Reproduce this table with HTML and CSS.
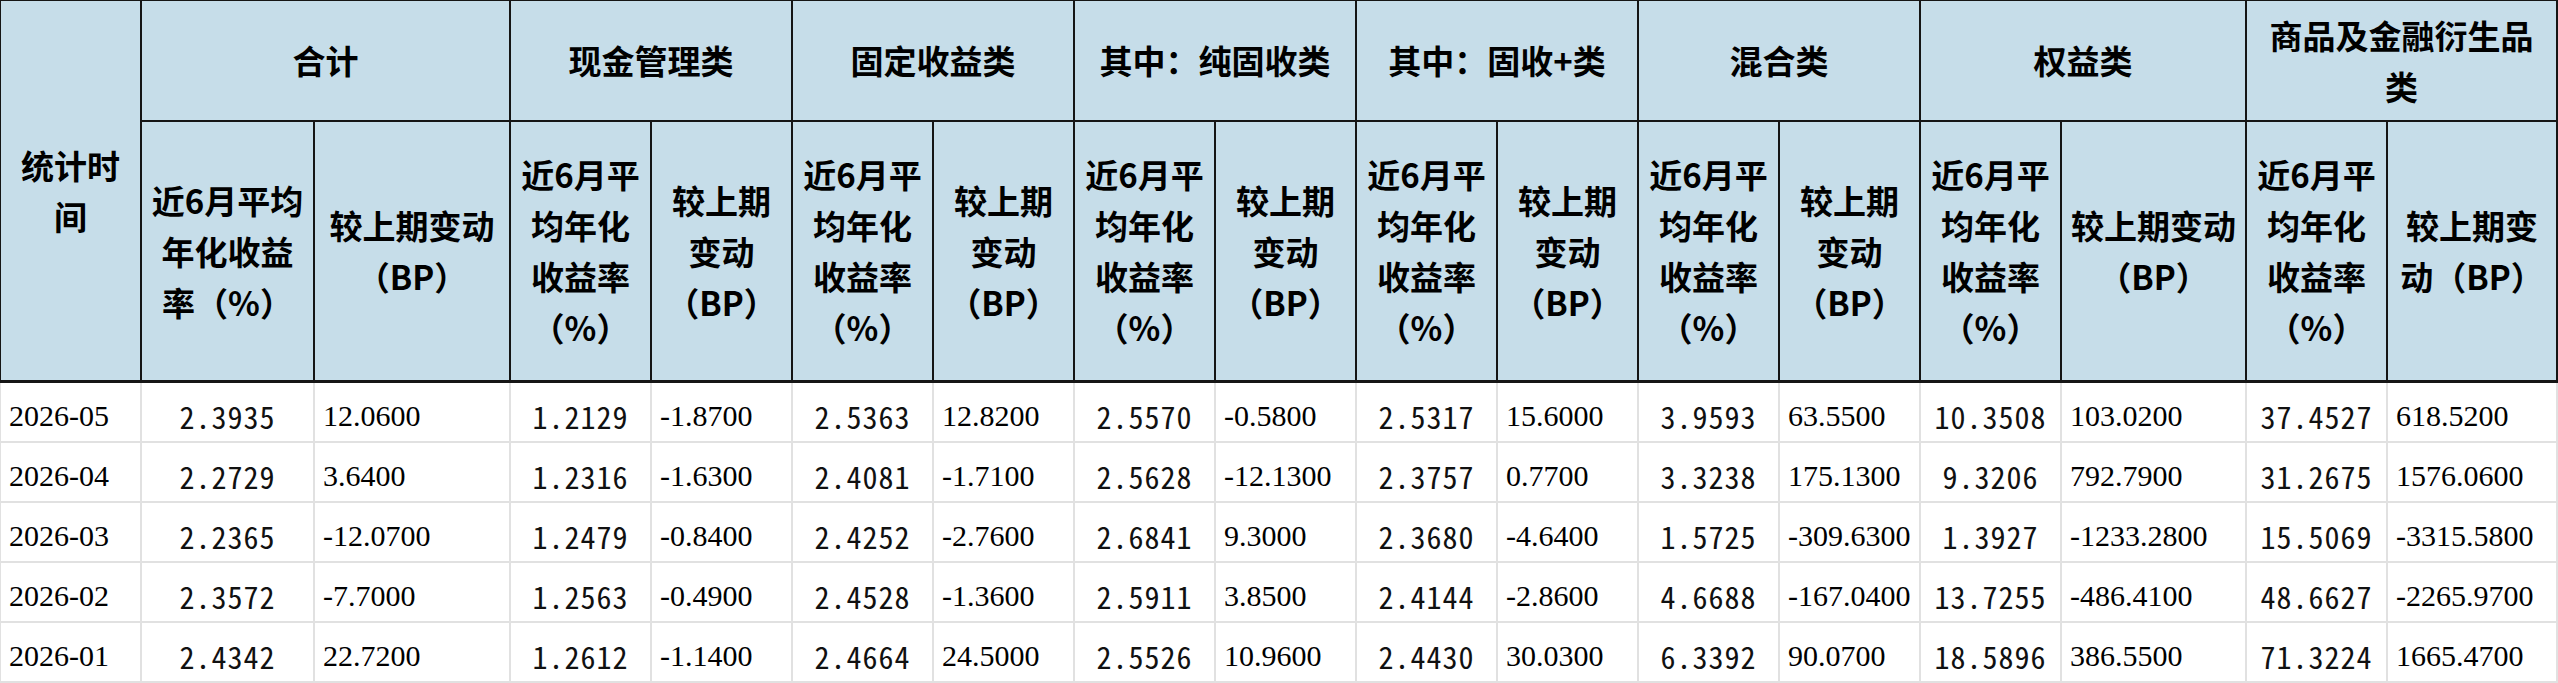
FILE: index.html
```html
<!DOCTYPE html>
<html lang="zh-CN">
<head>
<meta charset="utf-8">
<title>统计</title>
<link rel="stylesheet" href="styles.css">
</head>
<body>
<div class="grid">
  <div class="h first span-r">统计时间</div>
  <div class="h g">合计</div>
  <div class="h g">现金管理类</div>
  <div class="h g">固定收益类</div>
  <div class="h g">其中：纯固收类</div>
  <div class="h g">其中：固收+类</div>
  <div class="h g">混合类</div>
  <div class="h g">权益类</div>
  <div class="h g">商品及金融衍生品类</div>

  <div class="h s">近6月平均年化收益率（%）</div><div class="h s">较上期变动（BP）</div>
  <div class="h s">近6月平均年化收益率（%）</div><div class="h s">较上期变动（BP）</div>
  <div class="h s">近6月平均年化收益率（%）</div><div class="h s">较上期变动（BP）</div>
  <div class="h s">近6月平均年化收益率（%）</div><div class="h s">较上期变动（BP）</div>
  <div class="h s">近6月平均年化收益率（%）</div><div class="h s">较上期变动（BP）</div>
  <div class="h s">近6月平均年化收益率（%）</div><div class="h s">较上期变动（BP）</div>
  <div class="h s">近6月平均年化收益率（%）</div><div class="h s">较上期变动（BP）</div>
  <div class="h s">近6月平均年化收益率（%）</div><div class="h s">较上期变动（BP）</div>

  <div class="d date first">2026-05</div>
  <div class="d r">2.3935</div><div class="d b">12.0600</div>
  <div class="d r">1.2129</div><div class="d b">-1.8700</div>
  <div class="d r">2.5363</div><div class="d b">12.8200</div>
  <div class="d r">2.5570</div><div class="d b">-0.5800</div>
  <div class="d r">2.5317</div><div class="d b">15.6000</div>
  <div class="d r">3.9593</div><div class="d b">63.5500</div>
  <div class="d r">10.3508</div><div class="d b">103.0200</div>
  <div class="d r">37.4527</div><div class="d b">618.5200</div>

  <div class="d date first">2026-04</div>
  <div class="d r">2.2729</div><div class="d b">3.6400</div>
  <div class="d r">1.2316</div><div class="d b">-1.6300</div>
  <div class="d r">2.4081</div><div class="d b">-1.7100</div>
  <div class="d r">2.5628</div><div class="d b">-12.1300</div>
  <div class="d r">2.3757</div><div class="d b">0.7700</div>
  <div class="d r">3.3238</div><div class="d b">175.1300</div>
  <div class="d r">9.3206</div><div class="d b">792.7900</div>
  <div class="d r">31.2675</div><div class="d b">1576.0600</div>

  <div class="d date first">2026-03</div>
  <div class="d r">2.2365</div><div class="d b">-12.0700</div>
  <div class="d r">1.2479</div><div class="d b">-0.8400</div>
  <div class="d r">2.4252</div><div class="d b">-2.7600</div>
  <div class="d r">2.6841</div><div class="d b">9.3000</div>
  <div class="d r">2.3680</div><div class="d b">-4.6400</div>
  <div class="d r">1.5725</div><div class="d b">-309.6300</div>
  <div class="d r">1.3927</div><div class="d b">-1233.2800</div>
  <div class="d r">15.5069</div><div class="d b">-3315.5800</div>

  <div class="d date first">2026-02</div>
  <div class="d r">2.3572</div><div class="d b">-7.7000</div>
  <div class="d r">1.2563</div><div class="d b">-0.4900</div>
  <div class="d r">2.4528</div><div class="d b">-1.3600</div>
  <div class="d r">2.5911</div><div class="d b">3.8500</div>
  <div class="d r">2.4144</div><div class="d b">-2.8600</div>
  <div class="d r">4.6688</div><div class="d b">-167.0400</div>
  <div class="d r">13.7255</div><div class="d b">-486.4100</div>
  <div class="d r">48.6627</div><div class="d b">-2265.9700</div>

  <div class="d date first">2026-01</div>
  <div class="d r">2.4342</div><div class="d b">22.7200</div>
  <div class="d r">1.2612</div><div class="d b">-1.1400</div>
  <div class="d r">2.4664</div><div class="d b">24.5000</div>
  <div class="d r">2.5526</div><div class="d b">10.9600</div>
  <div class="d r">2.4430</div><div class="d b">30.0300</div>
  <div class="d r">6.3392</div><div class="d b">90.0700</div>
  <div class="d r">18.5896</div><div class="d b">386.5500</div>
  <div class="d r">71.3224</div><div class="d b">1665.4700</div>
</div>
</body>
</html>
```
FILE: styles.css
```css
html, body {
  margin: 0;
  padding: 0;
  background: #ffffff;
}

.grid {
  display: grid;
  width: 2558px;
  grid-template-columns: 142px 173px 196px repeat(11, 141px) 185px 141px 170px;
  grid-template-rows: 122px 261px repeat(5, 60px);
}

.grid > div {
  box-sizing: border-box;
  display: flex;
  align-items: center;
  min-width: 0;
}

.h {
  background: #c6dde9;
  border-right: 2px solid #151515;
  border-bottom: 2px solid #151515;
  border-top: 1px solid #151515;
  justify-content: center;
  text-align: center;
  padding: 0 7px;
  font-family: "Noto Sans CJK SC", "Noto Sans", sans-serif;
  font-weight: 700;
  font-size: 33px;
  line-height: 51px;
  color: #000;
}

.h.s {
  border-top: 0;
  border-bottom: 3px solid #151515;
}

.h.first {
  border-left: 1px solid #151515;
  border-bottom: 3px solid #151515;
}

.span-r {
  grid-row: span 2;
}

.g {
  grid-column: span 2;
}

.d {
  background: #ffffff;
  border-right: 2px solid #e1e1e1;
  border-bottom: 2px solid #e1e1e1;
  padding-top: 7px;
  color: #000;
  white-space: nowrap;
}

.d.first {
  border-left: 1px solid #e1e1e1;
}

.date,
.b {
  font-family: "Liberation Serif", "Times New Roman", serif;
  font-size: 30px;
  justify-content: flex-start;
  padding-left: 8px;
}

.r {
  font-family: "Noto Sans Mono CJK SC", "DejaVu Sans Mono", monospace;
  font-size: 30px;
  font-weight: 300;
  letter-spacing: 1px;
  justify-content: center;
  color: #111;
}
```
